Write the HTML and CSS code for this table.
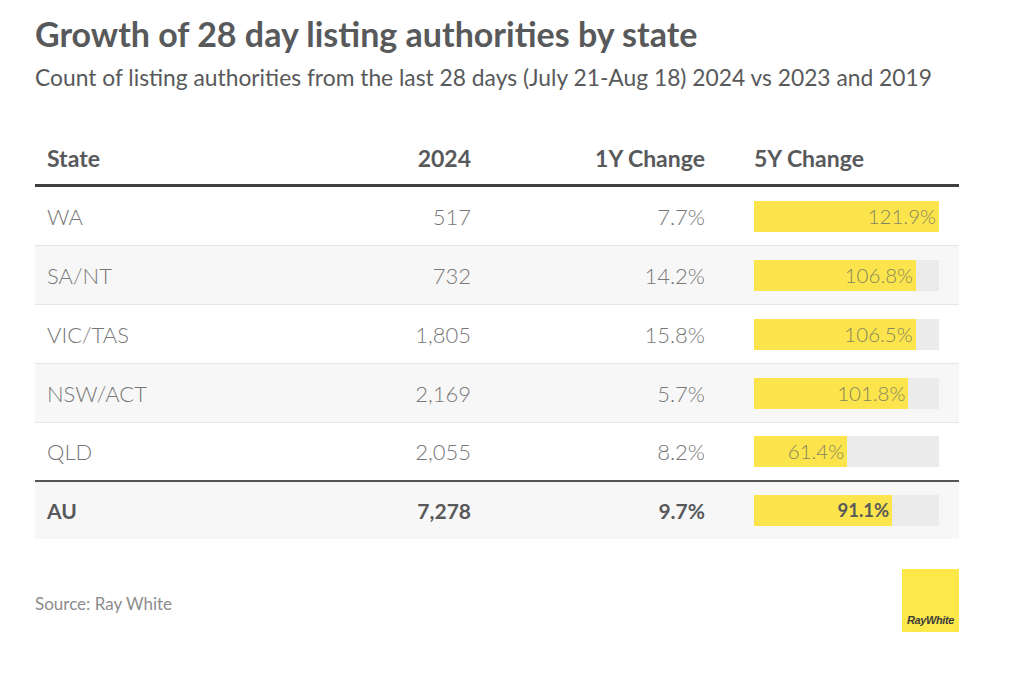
FILE: index.html
```html
<!DOCTYPE html>
<html lang="en">
<head>
<meta charset="utf-8">
<title>Growth of 28 day listing authorities by state</title>
<link rel="stylesheet" href="styles.css">
</head>
<body>
<main class="chart">
  <h1 class="title">Growth of 28 day listing authorities by state</h1>
  <p class="subtitle">Count of listing authorities from the last 28 days (July 21-Aug 18) 2024 vs 2023 and 2019</p>

  <div class="table">
    <div class="row head">
      <div class="cell state">State</div>
      <div class="cell num">2024</div>
      <div class="cell chg">1Y Change</div>
      <div class="cell bar-cell">5Y Change</div>
    </div>
    <div class="row">
      <div class="cell state">WA</div>
      <div class="cell num">517</div>
      <div class="cell chg">7.7%</div>
      <div class="cell bar-cell"><div class="track"><div class="fill" style="width:100%">121.9%</div></div></div>
    </div>
    <div class="row alt">
      <div class="cell state">SA/NT</div>
      <div class="cell num">732</div>
      <div class="cell chg">14.2%</div>
      <div class="cell bar-cell"><div class="track"><div class="fill" style="width:87.6%">106.8%</div></div></div>
    </div>
    <div class="row">
      <div class="cell state">VIC/TAS</div>
      <div class="cell num">1,805</div>
      <div class="cell chg">15.8%</div>
      <div class="cell bar-cell"><div class="track"><div class="fill" style="width:87.4%">106.5%</div></div></div>
    </div>
    <div class="row alt">
      <div class="cell state">NSW/ACT</div>
      <div class="cell num">2,169</div>
      <div class="cell chg">5.7%</div>
      <div class="cell bar-cell"><div class="track"><div class="fill" style="width:83.5%">101.8%</div></div></div>
    </div>
    <div class="row last">
      <div class="cell state">QLD</div>
      <div class="cell num">2,055</div>
      <div class="cell chg">8.2%</div>
      <div class="cell bar-cell"><div class="track"><div class="fill" style="width:50.4%">61.4%</div></div></div>
    </div>
    <div class="row total">
      <div class="cell state">AU</div>
      <div class="cell num">7,278</div>
      <div class="cell chg">9.7%</div>
      <div class="cell bar-cell"><div class="track"><div class="fill" style="width:74.7%">91.1%</div></div></div>
    </div>
  </div>

  <footer class="foot">
    <span class="source">Source: Ray White</span>
    <div class="logo"><span class="logo-text">RayWhite</span></div>
  </footer>
</main>
</body>
</html>
```

FILE: styles.css
```css
* { box-sizing: border-box; }
html, body { margin: 0; padding: 0; background: #fff; }
body {
  font-family: Lato, "Open Sans", "Liberation Sans", sans-serif;
  color: #58595b;
}
.chart {
  width: 924px;
  margin-left: 35px;
  padding-top: 14px;
}
.title {
  margin: 0;
  font-size: 34px;
  line-height: 40px;
  font-weight: 700;
  color: #58595b;
}
.subtitle {
  margin: 10px 0 0;
  font-size: 22.8px;
  line-height: 26px;
  font-weight: 400;
  color: #58595b;
}
.table {
  margin-top: 41px;
  display: flex;
  flex-direction: column;
}
.row {
  display: grid;
  grid-template-columns: 248px 200px 259px 217px;
  height: 59px;
  align-items: center;
  border-bottom: 1px solid #e6e6e6;
  font-size: 22px;
  font-weight: 300;
  color: #777;
}
.row.alt { background: #f7f7f7; }
.row.head {
  height: 56px;
  border-bottom: 3px solid #3f3f3f;
  font-size: 23px;
  font-weight: 700;
  color: #58595b;
}
.row.last { border-bottom: 2px solid #555; }
.row.total {
  background: #f7f7f7;
  border-bottom: none;
  height: 57px;
  font-size: 21px;
  font-weight: 700;
  color: #58595b;
}
.cell { white-space: nowrap; }
.state { padding-left: 12px; }
.num { text-align: right; padding-right: 12px; }
.chg { text-align: right; padding-right: 37px; }
.bar-cell { padding-left: 12px; }
.track {
  width: 185px;
  height: 31px;
  background: #ebebeb;
}
.fill {
  height: 100%;
  background: #fce54c;
  text-align: right;
  padding-right: 3px;
  line-height: 31px;
  font-size: 20.5px;
  font-weight: 300;
  color: #86855f;
}
.total .fill { color: #58595b; font-weight: 700; font-size: 18.5px; }
.foot {
  display: flex;
  justify-content: space-between;
  align-items: center;
  margin-top: 30px;
}
.source {
  font-size: 17px;
  color: #8c8c8c;
  margin-top: 6px;
}
.logo {
  width: 57px;
  height: 63px;
  background: #fde84a;
  display: flex;
  align-items: flex-end;
  justify-content: center;
  padding-bottom: 6px;
}
.logo-text {
  font-family: "Liberation Sans", Arial, sans-serif;
  font-weight: 700;
  font-style: italic;
  font-size: 11px;
  letter-spacing: -0.4px;
  color: #3c3c3c;
}
```
